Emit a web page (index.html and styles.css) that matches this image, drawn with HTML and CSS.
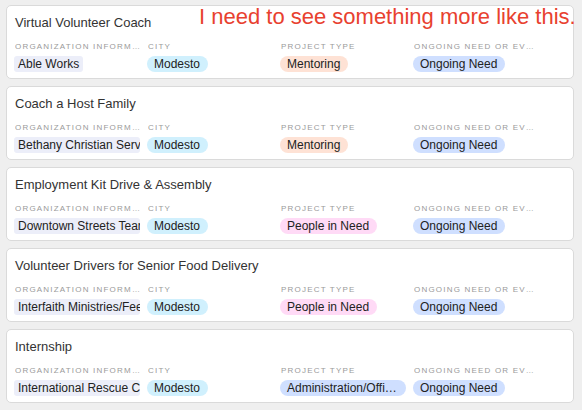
FILE: index.html
```html
<!DOCTYPE html>
<html lang="en">

<head>
    <meta charset="UTF-8">
    <meta name="viewport" content="width=device-width, initial-scale=1.0">
    <title>Volunteer Projects</title>
    <link rel="stylesheet" href="styles.css">
</head>

<body>
<!-- Note written over the list -->
<div class="note">I need to see something more like this.</div>

<div class="list">
    <div class="card">
        <div class="card-title">Virtual Volunteer Coach</div>
        <div class="fields">
            <div class="field">
                <div class="label">Organization Information</div>
                <div><span class="org">Able Works</span></div>
            </div>
            <div class="field">
                <div class="label">City</div>
                <div><span class="pill city">Modesto</span></div>
            </div>
            <div class="field">
                <div class="label">Project Type</div>
                <div><span class="pill mentoring">Mentoring</span></div>
            </div>
            <div class="field">
                <div class="label">Ongoing Need or Event</div>
                <div><span class="pill ongoing">Ongoing Need</span></div>
            </div>
        </div>
    </div>

    <div class="card">
        <div class="card-title">Coach a Host Family</div>
        <div class="fields">
            <div class="field">
                <div class="label">Organization Information</div>
                <div><span class="org">Bethany Christian Services</span></div>
            </div>
            <div class="field">
                <div class="label">City</div>
                <div><span class="pill city">Modesto</span></div>
            </div>
            <div class="field">
                <div class="label">Project Type</div>
                <div><span class="pill mentoring">Mentoring</span></div>
            </div>
            <div class="field">
                <div class="label">Ongoing Need or Event</div>
                <div><span class="pill ongoing">Ongoing Need</span></div>
            </div>
        </div>
    </div>

    <div class="card">
        <div class="card-title">Employment Kit Drive &amp; Assembly</div>
        <div class="fields">
            <div class="field">
                <div class="label">Organization Information</div>
                <div><span class="org">Downtown Streets Team</span></div>
            </div>
            <div class="field">
                <div class="label">City</div>
                <div><span class="pill city">Modesto</span></div>
            </div>
            <div class="field">
                <div class="label">Project Type</div>
                <div><span class="pill need">People in Need</span></div>
            </div>
            <div class="field">
                <div class="label">Ongoing Need or Event</div>
                <div><span class="pill ongoing">Ongoing Need</span></div>
            </div>
        </div>
    </div>

    <div class="card">
        <div class="card-title">Volunteer Drivers for Senior Food Delivery</div>
        <div class="fields">
            <div class="field">
                <div class="label">Organization Information</div>
                <div><span class="org">Interfaith Ministries/Feed</span></div>
            </div>
            <div class="field">
                <div class="label">City</div>
                <div><span class="pill city">Modesto</span></div>
            </div>
            <div class="field">
                <div class="label">Project Type</div>
                <div><span class="pill need">People in Need</span></div>
            </div>
            <div class="field">
                <div class="label">Ongoing Need or Event</div>
                <div><span class="pill ongoing">Ongoing Need</span></div>
            </div>
        </div>
    </div>

    <div class="card">
        <div class="card-title">Internship</div>
        <div class="fields">
            <div class="field">
                <div class="label">Organization Information</div>
                <div><span class="org">International Rescue Committee</span></div>
            </div>
            <div class="field">
                <div class="label">City</div>
                <div><span class="pill city">Modesto</span></div>
            </div>
            <div class="field">
                <div class="label">Project Type</div>
                <div><span class="pill admin">Administration/Office Support</span></div>
            </div>
            <div class="field">
                <div class="label">Ongoing Need or Event</div>
                <div><span class="pill ongoing">Ongoing Need</span></div>
            </div>
        </div>
    </div>
</div>
</body>

</html>
```

FILE: styles.css
```css
/* Card list of volunteer projects */
body {
    margin: 0;
    background-color: #efefef;
    font-family: "Liberation Sans", Arial, sans-serif;
    color: #333;
    position: relative;
    height: 410px;
    overflow: hidden;
}

.list {
    display: flex;
    flex-direction: column;
    gap: 7px;
    padding: 5px 8px 0 6px;
}

.card {
    background-color: #fff;
    border: 1px solid #dadada;
    border-radius: 5px;
    height: 72px;
    padding: 0 8px;
    flex-shrink: 0;
}

.card-title {
    font-size: 13px;
    line-height: 16px;
    margin-top: 9px;
    color: #333;
}

.fields {
    display: grid;
    grid-template-columns: repeat(4, 126px);
    column-gap: 7px;
    margin-top: 11px;
}

.field {
    min-width: 0;
}

.label {
    font-size: 8px;
    line-height: 10px;
    letter-spacing: 1.2px;
    text-transform: uppercase;
    color: #9a9a9a;
    white-space: nowrap;
    overflow: hidden;
    text-overflow: ellipsis;
    margin-bottom: 4px;
}

.org {
    display: inline-block;
    max-width: 100%;
    box-sizing: border-box;
    background-color: #eceef9;
    border-radius: 3px;
    font-size: 12px;
    line-height: 16px;
    padding: 0 4px;
    white-space: nowrap;
    overflow: hidden;
    vertical-align: top;
    margin-left: -1px;
    color: #222;
}

.pill {
    display: inline-block;
    max-width: 100%;
    box-sizing: border-box;
    font-size: 12px;
    line-height: 16px;
    padding: 0 8px 0 7px;
    border-radius: 8px;
    white-space: nowrap;
    overflow: hidden;
    text-overflow: ellipsis;
    vertical-align: top;
    margin-left: -1px;
    color: #222;
}

.city {
    background-color: #d0f0fd;
}

.mentoring {
    background-color: #fee2d5;
}

.need {
    background-color: #ffdaf6;
}

.admin,
.ongoing {
    background-color: #cfdfff;
}

/* Red remark typed over the screenshot */
.note {
    position: absolute;
    top: 4px;
    left: 199px;
    font-size: 22px;
    color: #e8412f;
    white-space: nowrap;
}
```
